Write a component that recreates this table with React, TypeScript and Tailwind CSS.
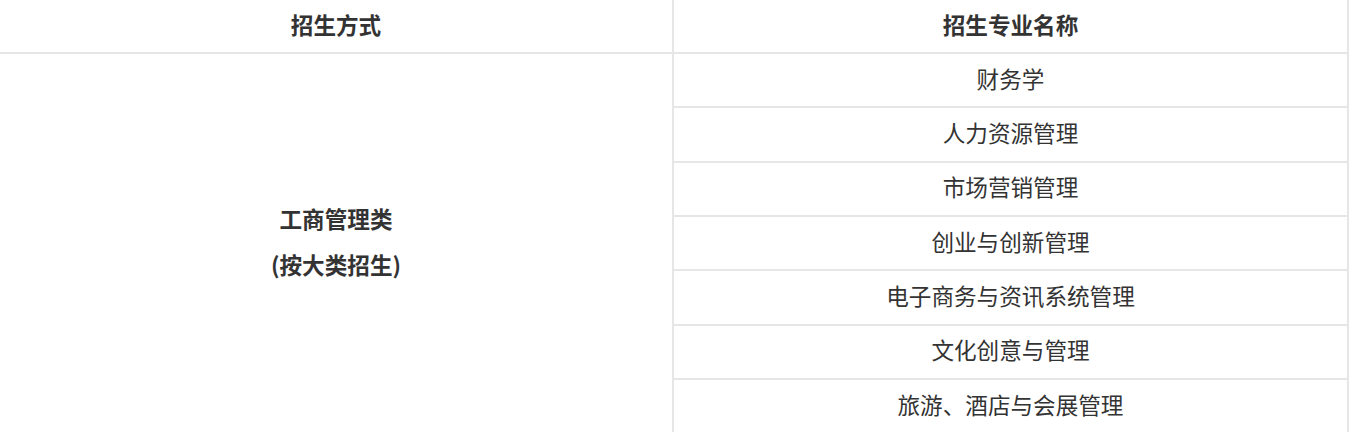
import React from "react";

const majors = [
  "财务学",
  "人力资源管理",
  "市场营销管理",
  "创业与创新管理",
  "电子商务与资讯系统管理",
  "文化创意与管理",
  "旅游、酒店与会展管理",
];

export default function App() {
  return (
    <div
      className="w-[1349px] h-[432px] overflow-hidden bg-white text-[#333]"
      style={{ fontFamily: '"Noto Sans CJK SC", "Noto Sans", sans-serif' }}
    >
      <div className="grid grid-cols-[674px_675px] grid-rows-[54px_repeat(7,54.33px)] text-[22.6px]">
        <div className="flex items-center justify-center pb-[3px] border-r-2 border-b-2 border-[#e6e6e6] font-bold">
          招生方式
        </div>
        <div className="flex items-center justify-center pb-[3px] border-r-2 border-b-2 border-[#e6e6e6] font-bold">
          招生专业名称
        </div>
        <div className="row-span-7 flex flex-col items-center justify-center pb-[3px] border-r-2 border-b-2 border-[#e6e6e6] font-bold leading-[46px]">
          <span>工商管理类</span>
          <span>(按大类招生)</span>
        </div>
        {majors.map((m) => (
          <div
            key={m}
            className="flex items-center justify-center pb-[3px] border-r-2 border-b-2 border-[#e6e6e6]"
          >
            {m}
          </div>
        ))}
      </div>
    </div>
  );
}
